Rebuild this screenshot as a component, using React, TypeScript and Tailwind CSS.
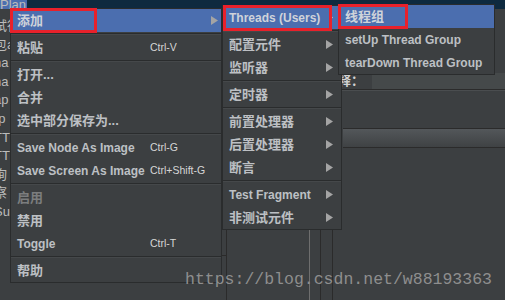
import React from "react";

const FONT = { fontFamily: '"Liberation Sans", "Noto Sans CJK SC", sans-serif' };

function Arrow({ small }: { small?: boolean }) {
  return small ? (
    <svg width="4" height="7" viewBox="0 0 4 7" className="shrink-0">
      <polygon points="0,0 4,3.5 0,7" fill="#c8c8c8" />
    </svg>
  ) : (
    <svg width="7" height="9" viewBox="0 0 7 9" className="shrink-0">
      <polygon points="0,0 7,4.5 0,9" fill="#a4a4a4" />
    </svg>
  );
}

type Item = {
  label?: string;
  shortcut?: string;
  arrow?: boolean;
  smallArrow?: boolean;
  hl?: boolean;
  disabled?: boolean;
  sep?: boolean;
};

const isLatin = (s?: string) => !!s && /^[\x00-\x7F]+$/.test(s);

function Menu({ items, shortcutCol, arrowPad }: { items: Item[]; shortcutCol?: number; arrowPad: string }) {
  return (
    <div className="flex flex-col bg-[#3c3f41] border border-[#2a2c2d]">
      {items.map((it, i) =>
        it.sep ? (
          <div key={i} className="h-[4px] pt-[1px]">
            <div className="h-[1px] bg-[#2a2c2d]" />
            <div className="h-[1px] bg-[#45484a]" />
          </div>
        ) : (
          <div
            key={i}
            className={`flex items-center h-[23px] pl-[6px] ${arrowPad} ${it.hl ? "bg-[#4b6eaf]" : ""}`}
          >
            <span
              className={`font-bold whitespace-nowrap ${isLatin(it.label) ? "text-[12px]" : "text-[13px]"} ${
                it.disabled ? "text-[#7b7d7e]" : it.hl ? "text-[#cfd3da]" : "text-[#bdc0c4]"
              }`}
              style={shortcutCol ? { width: shortcutCol } : undefined}
            >
              {it.label}
            </span>
            {it.shortcut && (
              <span className="text-[10.5px] text-[#d6d6d6] whitespace-nowrap">{it.shortcut}</span>
            )}
            <div className="flex-1" />
            {it.arrow && <Arrow />}
            {it.smallArrow && <Arrow small />}
          </div>
        )
      )}
    </div>
  );
}

const mainItems: Item[] = [
  { label: "添加", arrow: true, hl: true },
  { sep: true },
  { label: "粘贴", shortcut: "Ctrl-V" },
  { sep: true },
  { label: "打开..." },
  { label: "合并" },
  { label: "选中部分保存为..." },
  { sep: true },
  { label: "Save Node As Image", shortcut: "Ctrl-G" },
  { label: "Save Screen As Image", shortcut: "Ctrl+Shift-G" },
  { sep: true },
  { label: "启用", disabled: true },
  { label: "禁用" },
  { label: "Toggle", shortcut: "Ctrl-T" },
  { sep: true },
  { label: "帮助" },
];

const subItems: Item[] = [
  { label: "Threads (Users)", smallArrow: true, hl: true },
  { sep: true },
  { label: "配置元件", arrow: true },
  { label: "监听器", arrow: true },
  { sep: true },
  { label: "定时器", arrow: true },
  { sep: true },
  { label: "前置处理器", arrow: true },
  { label: "后置处理器", arrow: true },
  { label: "断言", arrow: true },
  { sep: true },
  { label: "Test Fragment", arrow: true },
  { label: "非测试元件", arrow: true },
];

const threadItems: Item[] = [
  { label: "线程组", hl: true },
  { label: "setUp Thread Group" },
  { label: "tearDown Thread Group" },
];

const treeLabels = ["试行", "包a", "na", "na", "ap", "rp", "TT", "TT", "询", "察", "Su"];

export default function App() {
  return (
    <div className="relative w-[505px] h-[300px] overflow-hidden bg-[#3c3f41]" style={FONT}>
      {/* background window */}
      <div className="flex flex-col h-full">
        <div className="flex h-[9px]">
          <div className="w-[27px] bg-[#4b6eaf] text-[13px] leading-[9px] text-[#bbbbbb] overflow-hidden whitespace-nowrap">
            Plan
          </div>
          <div className="flex-1 bg-[#0e2a3f]" />
        </div>
        <div className="flex flex-1">
          <div className="w-[10px] overflow-hidden flex flex-col pt-[8px] text-[13px] text-[#bbbbbb] leading-[18.6px] whitespace-nowrap">
            {treeLabels.map((t, i) => (
              <div key={i} className="h-[18.6px] -ml-[6px]">
                {t}
              </div>
            ))}
          </div>
          <div className="w-[216px] flex flex-col">
            <div className="h-[246px]" />
            <div className="h-[1px] bg-[#2b2b2b]" />
          </div>
          <div className="w-[83px] border-l border-[#2b2b2b]" />
          <div className="w-[11px] border-l border-[#6e6e6e]" />
          <div className="w-[12px] border-l border-[#2b2b2b]" />
          <div className="w-[6px] border-l border-[#2b2b2b]" />
          <div className="flex-1 flex flex-col pt-[64px]">
            <div className="flex items-center h-[16px]">
              <span className="w-[34px] text-[13px] font-bold text-[#d0d0d0] leading-[16px]">释：</span>
              <div className="flex-1 h-[16px] bg-[#45494a]" />
            </div>
            <div className="h-[1px] bg-[#2b2b2b]" />
            <div className="h-[1px] bg-[#4a4d4f]" />
            <div className="h-[37px]" />
            <div className="ml-[5px] h-[20px] border-y border-[#2b2b2b] bg-gradient-to-b from-[#53575a] to-[#3f4244]" />
          </div>
        </div>
      </div>

      {/* main popup menu */}
      <div className="absolute left-[10px] top-[8px] w-[212px]">
        <Menu items={mainItems} shortcutCol={133} arrowPad="pr-[3px]" />
      </div>
      {/* submenu */}
      <div className="absolute left-[222px] top-[5px] w-[120px]">
        <Menu items={subItems} arrowPad="pr-[8px]" />
      </div>
      {/* thread group submenu */}
      <div className="absolute left-[338px] top-[4px] w-[157px]">
        <Menu items={threadItems} arrowPad="pr-[8px]" />
      </div>

      {/* red annotation boxes */}
      <div className="absolute left-[10px] top-[8px] w-[87px] h-[25px] border-[3px] border-[#e8212b]" />
      <div className="absolute left-[223px] top-[5px] w-[109px] h-[26px] border-[3px] border-[#e8212b]" />
      <div className="absolute left-[338px] top-[4px] w-[70px] h-[25px] border-[3px] border-[#e8212b]" />

      {/* watermark */}
      <div
        className="absolute left-[185px] top-[268px] text-[16.5px] text-[#8e8e8e] whitespace-nowrap"
        style={{ fontFamily: '"Liberation Mono", monospace' }}
      >
        https://blog.csdn.net/w88193363
      </div>
    </div>
  );
}
